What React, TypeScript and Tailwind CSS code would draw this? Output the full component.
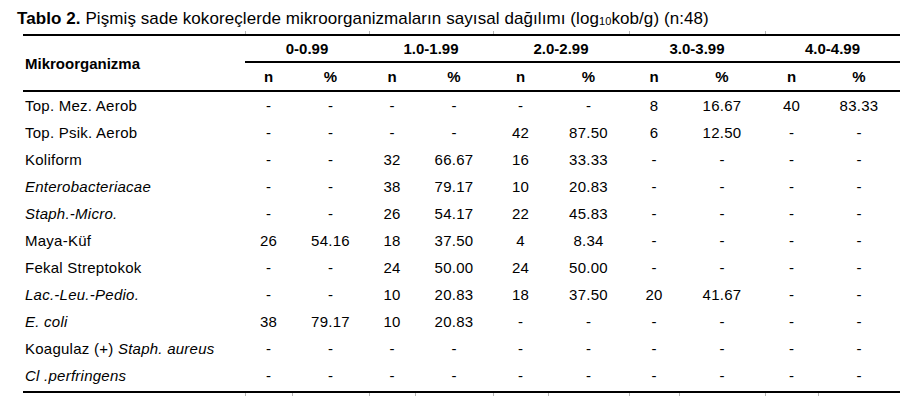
const COLS = "grid-cols-[222px_47px_77px_46px_78px_55px_81px_50px_86px_53px_82px]";

const groups = ["0-0.99", "1.0-1.99", "2.0-2.99", "3.0-3.99", "4.0-4.99"];

type Row = { name: React.ReactNode; values: string[] };

const rows: Row[] = [
  { name: "Top. Mez. Aerob", values: ["-", "-", "-", "-", "-", "-", "8", "16.67", "40", "83.33"] },
  { name: "Top. Psik. Aerob", values: ["-", "-", "-", "-", "42", "87.50", "6", "12.50", "-", "-"] },
  { name: "Koliform", values: ["-", "-", "32", "66.67", "16", "33.33", "-", "-", "-", "-"] },
  { name: <i>Enterobacteriacae</i>, values: ["-", "-", "38", "79.17", "10", "20.83", "-", "-", "-", "-"] },
  { name: <i>Staph.-Micro.</i>, values: ["-", "-", "26", "54.17", "22", "45.83", "-", "-", "-", "-"] },
  { name: "Maya-Küf", values: ["26", "54.16", "18", "37.50", "4", "8.34", "-", "-", "-", "-"] },
  { name: "Fekal Streptokok", values: ["-", "-", "24", "50.00", "24", "50.00", "-", "-", "-", "-"] },
  { name: <i>Lac.-Leu.-Pedio.</i>, values: ["-", "-", "10", "20.83", "18", "37.50", "20", "41.67", "-", "-"] },
  { name: <i>E. coli</i>, values: ["38", "79.17", "10", "20.83", "-", "-", "-", "-", "-", "-"] },
  {
    name: (
      <>
        Koagulaz (+) <i>Staph. aureus</i>
      </>
    ),
    values: ["-", "-", "-", "-", "-", "-", "-", "-", "-", "-"],
  },
  { name: <i>Cl .perfringens</i>, values: ["-", "-", "-", "-", "-", "-", "-", "-", "-", "-"] },
];

function TickRow({ all }: { all: boolean }) {
  return (
    <div className={`grid ${COLS} h-[3px]`}>
      {Array.from({ length: 11 }).map((_, i) => {
        const mark = i > 0 && (all || i % 2 === 1);
        return <div key={i} className={mark ? "border-l border-[#b5b5b5]" : ""} />;
      })}
    </div>
  );
}

export default function App() {
  return (
    <div
      className="w-[915px] h-[401px] bg-white text-black overflow-hidden"
      style={{ fontFamily: '"Liberation Sans", Arial, sans-serif' }}
    >
      <div className="h-[31px] pl-[17px] pt-[8px] text-[17px] leading-[21px] tracking-[0.08px] whitespace-nowrap">
        <b>Tablo 2.</b> Pişmiş sade kokoreçlerde mikroorganizmaların sayısal dağılımı (log
        <sub className="text-[11px] relative top-[1px] align-baseline">10</sub>kob/g) (n:48)
      </div>

      <div className="ml-[23px] w-[877px]">
        <TickRow all={false} />

        <div className={`grid ${COLS} border-t-2 border-b-2 border-black text-[15px] font-bold`}>
          <div className="row-span-2 flex items-center pl-[2px] pt-[3px]">Mikroorganizma</div>
          {groups.map((g) => (
            <div key={g} className="col-span-2 h-[27px] pt-[1px] border-b-2 border-black flex items-center justify-center">
              {g}
            </div>
          ))}
          {groups.map((g) => (
            <div key={g + "-sub"} className="contents">
              <div className="h-[27px] pt-[1px] flex items-center justify-center">n</div>
              <div className="h-[27px] pt-[1px] flex items-center justify-center">%</div>
            </div>
          ))}
        </div>

        <div className="border-b-2 border-black text-[15px] tracking-[0.25px] py-[1px]">
          {rows.map((r, idx) => (
            <div key={idx} className={`grid ${COLS} h-[27px] items-center`}>
              <div className="pl-[2px] whitespace-nowrap">{r.name}</div>
              {r.values.map((v, j) => (
                <div key={j} className="text-center">
                  {v}
                </div>
              ))}
            </div>
          ))}
        </div>

        <TickRow all={true} />
      </div>
    </div>
  );
}
